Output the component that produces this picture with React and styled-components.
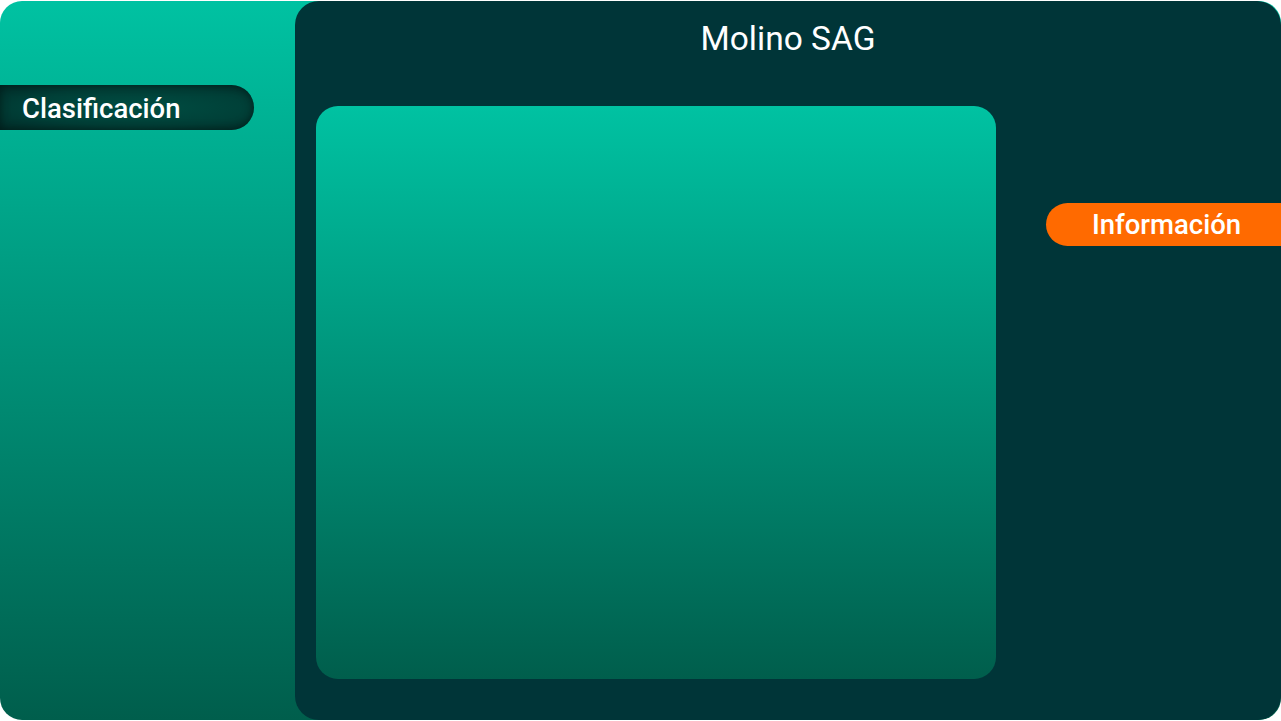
import React from "react";
import styled, { createGlobalStyle } from "styled-components";

const Global = createGlobalStyle`
  html, body { margin: 0; padding: 0; background: #ffffff; }
  body { font-family: Roboto, "Noto Sans", sans-serif; }
  * { box-sizing: border-box; }
`;

const Frame = styled.div`
  margin-top: 1px;
  width: 1281px;
  height: 719px;
  border-radius: 22px;
  overflow: hidden;
  background: linear-gradient(180deg, #00c2a2 0%, #005e4c 100%);
  display: grid;
  grid-template-columns: 295px 1fr;
`;

const Sidebar = styled.aside`
  padding-top: 84px;
  display: flex;
  flex-direction: column;
  align-items: flex-start;
`;

const NavPill = styled.div`
  width: 254px;
  height: 45px;
  border-radius: 0 23px 23px 0;
  background: radial-gradient(ellipse at 55% 50%, #004d42 0%, #003f37 60%, #002c28 100%);
  box-shadow: inset 0 0 10px rgba(0, 20, 18, 0.7);
  color: #ffffff;
  font-size: 27.5px;
  font-weight: 500;
  display: flex;
  align-items: center;
  padding-left: 22px;
  padding-top: 1px;
`;

const Panel = styled.main`
  background: #003538;
  border-radius: 24px;
  display: flex;
  flex-direction: column;
`;

const Title = styled.h1`
  margin: 0;
  padding-top: 18px;
  height: 105px;
  text-align: center;
  color: #ffffff;
  font-size: 33.5px;
  font-weight: 400;
  line-height: 40px;
`;

const Body = styled.div`
  display: flex;
  padding-left: 21px;
`;

const Card = styled.section`
  width: 680px;
  height: 573px;
  border-radius: 22px;
  background: linear-gradient(180deg, #00c2a2 0%, #005e4c 100%);
`;

const Aside = styled.div`
  flex: 1;
  display: flex;
  flex-direction: column;
  align-items: flex-end;
  padding-top: 97px;
`;

const InfoPill = styled.div`
  width: 235px;
  height: 43px;
  border-radius: 22px 0 0 22px;
  background: #ff6a00;
  color: #ffffff;
  font-size: 27.5px;
  font-weight: 500;
  display: flex;
  align-items: center;
  justify-content: center;
  padding-left: 6px;
`;

export default function App() {
  return (
    <>
      <Global />
      <Frame>
        <Sidebar>
          <NavPill>Clasificación</NavPill>
        </Sidebar>
        <Panel>
          <Title>Molino SAG</Title>
          <Body>
            <Card />
            <Aside>
              <InfoPill>Información</InfoPill>
            </Aside>
          </Body>
        </Panel>
      </Frame>
    </>
  );
}
